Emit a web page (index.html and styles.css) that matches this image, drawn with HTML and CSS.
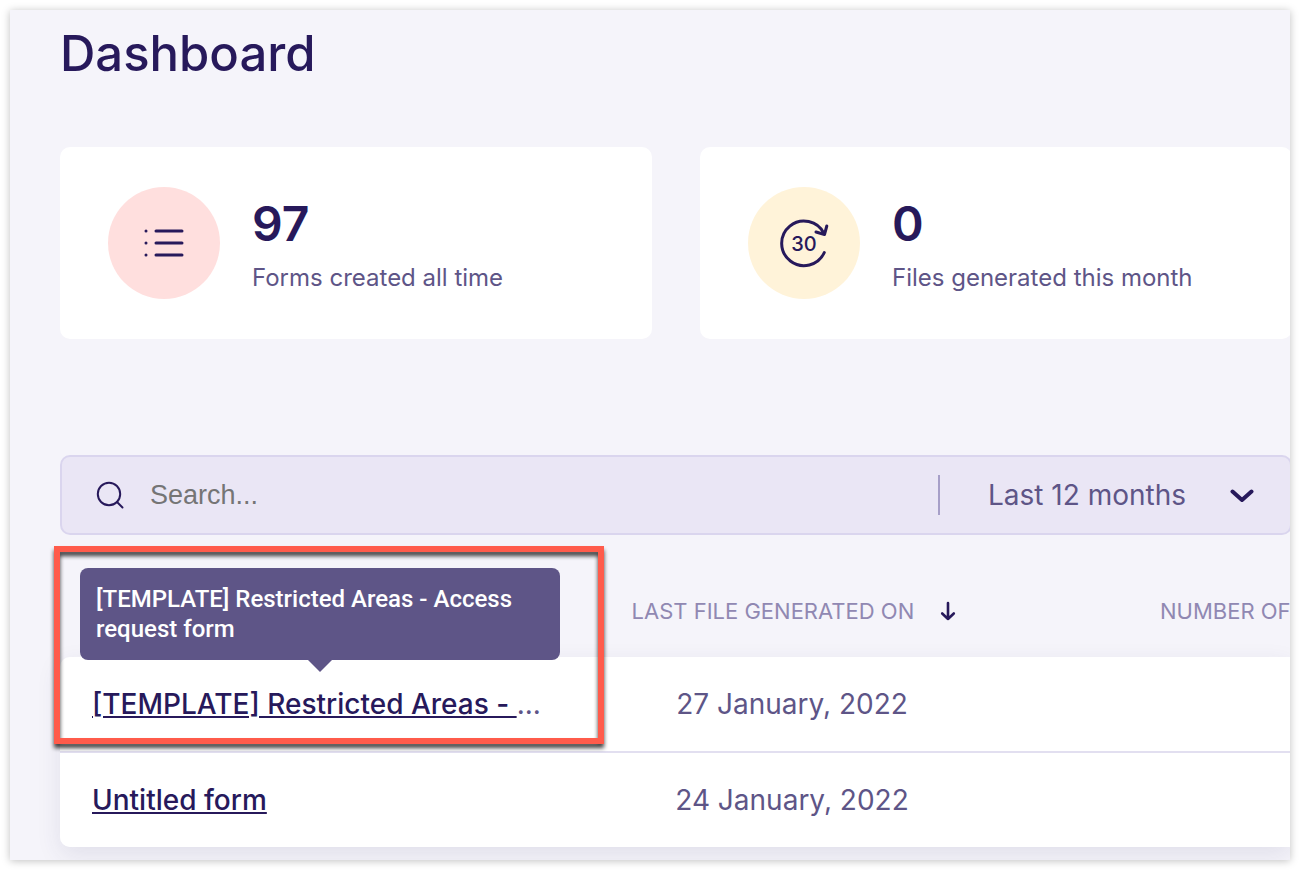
FILE: index.html
```
<!DOCTYPE html>
<html lang="en">
<head>
<meta charset="UTF-8">
<meta name="viewport" content="width=device-width, initial-scale=1.0">
<title>Dashboard</title>
<link rel="stylesheet" href="styles.css">
</head>
<body>
    <main class="window">
        <div class="content">
            <h1>Dashboard</h1>

            <div class="stats">
                <div class="card">
                    <div class="card-icon pink">
                        <svg width="48" height="48" viewBox="0 0 48 48" fill="none" stroke="#27195b" stroke-width="3" stroke-linecap="round">
                            <path d="M16 12h26M16 24h26M16 36h26"/>
                            <path d="M6 12h.01M6 24h.01M6 36h.01"/>
                        </svg>
                    </div>
                    <div class="card-text">
                        <strong>97</strong>
                        <span>Forms created all time</span>
                    </div>
                </div>
                <div class="card">
                    <div class="card-icon yellow">
                        <svg width="56" height="56" viewBox="0 0 56 56" fill="none" stroke="#27195b" stroke-width="3" stroke-linecap="round" stroke-linejoin="round">
                            <path d="M48.300 37.500A22.300 22.300 0 1 1 48 18.500"/>
                            <path d="M40 17l8.500 2.500L50.800 11"/>
                            <text x="28" y="36" text-anchor="middle">30</text>
                        </svg>
                    </div>
                    <div class="card-text">
                        <strong>0</strong>
                        <span>Files generated this month</span>
                    </div>
                </div>
            </div>

            <form class="search">
                <svg class="search-icon" width="28" height="28" viewBox="0 0 28 28" fill="none" stroke="#27195b" stroke-width="2" stroke-linecap="round">
                    <circle cx="13" cy="13" r="11.200"/>
                    <path d="M21 21l5.500 5.500"/>
                </svg>
                <input type="text" placeholder="Search..." aria-label="Search">
                <div class="period">
                    <select aria-label="Period">
                        <option>Last 12 months</option>
                    </select>
                    <svg class="chevron" width="24" height="16" viewBox="0 0 24 16" fill="none" stroke="#27195b" stroke-width="4" stroke-linecap="round" stroke-linejoin="round">
                        <path d="M2.500 3.500L12 12l9.500-8.500"/>
                    </svg>
                </div>
            </form>

            <div class="forms">
                <table>
                    <thead>
                        <tr>
                            <th class="col-name" aria-label="Name"></th>
                            <th class="col-date">
                                <span>Last file generated on</span>
                                <svg width="16" height="20" viewBox="0 0 16 20" fill="none" stroke="#27195b" stroke-width="2.600" stroke-linecap="round" stroke-linejoin="round">
                                    <path d="M8 2v16M2.200 12.500L8 18l5.800-5.500"/>
                                </svg>
                            </th>
                            <th class="col-number">Number of</th>
                        </tr>
                    </thead>
                    <tbody>
                        <tr>
                            <td>
                                <div class="name">
                                    <a href="#">[TEMPLATE] Restricted Areas - </a>...
                                    <div class="tooltip" role="tooltip">[TEMPLATE] Restricted Areas - Access request form</div>
                                </div>
                            </td>
                            <td class="date">27 January, 2022</td>
                            <td></td>
                        </tr>
                        <tr>
                            <td>
                                <div class="name">
                                    <a href="#">Untitled form</a>
                                </div>
                            </td>
                            <td class="date">24 January, 2022</td>
                            <td></td>
                        </tr>
                    </tbody>
                </table>
                <div class="highlight"></div>
            </div>
        </div>
    </main>
</body>
</html>
```

FILE: styles.css
```
* {
    box-sizing: border-box;
}
body {
    margin: 0;
    padding: 10px;
    background: #fff;
    font-family: Inter, "Liberation Sans", sans-serif;
    color: #5e5587;
}
.window {
    background: #f5f4fa;
    padding: 14px 0 13px 50px;
    overflow: hidden;
    box-shadow: 0 1px 8px rgba(0, 0, 0, 0.25);
}
/* content runs slightly past the right edge of the window */
.content {
    margin-right: -2px;
}
h1 {
    margin: 0 0 63px;
    font-size: 49px;
    line-height: 60px;
    font-weight: 500;
    color: #27195b;
}

/* stats */
.stats {
    display: grid;
    grid-template-columns: 1fr 1fr;
    gap: 48px;
    margin-bottom: 116px;
}
.card {
    display: flex;
    align-items: center;
    gap: 32px;
    padding: 40px 48px;
    background: #fff;
    border-radius: 10px;
}
.card-icon {
    display: flex;
    align-items: center;
    justify-content: center;
    flex: none;
    width: 112px;
    height: 112px;
    border-radius: 50%;
}
.card-icon text {
    font-size: 20px;
    font-weight: 500;
    fill: #27195b;
    stroke: none;
}
.pink {
    background: #ffdfde;
}
.yellow {
    background: #fff3d9;
}
.card-text {
    display: flex;
    flex-direction: column;
    gap: 8px;
    padding-top: 2px;
}
.card-text strong {
    font-size: 48px;
    line-height: 60px;
    font-weight: 600;
    color: #27195b;
}
.card-text span {
    font-size: 24px;
    line-height: 32px;
}

/* search bar */
.search {
    display: flex;
    align-items: center;
    height: 80px;
    padding-left: 34px;
    background: #eae6f5;
    border: 2px solid #dad5ee;
    border-radius: 10px;
}
.search-icon {
    flex: none;
}
.search input {
    flex: 1;
    min-width: 0;
    height: 76px;
    padding: 0 26px;
    border: none;
    outline: none;
    background: transparent;
    font-family: "Liberation Sans", Arial, sans-serif;
    font-size: 27px;
    color: #27195b;
}
.search input::placeholder {
    color: #757575;
}
.period {
    position: relative;
    border-left: 2px solid #a79fc8;
}
.period select {
    appearance: none;
    display: block;
    width: 350px;
    height: 40px;
    padding: 0 100px 0 48px;
    border: none;
    background: transparent;
    font-family: inherit;
    font-size: 28px;
    color: #5e5587;
}
.chevron {
    position: absolute;
    right: 36px;
    top: 13px;
    pointer-events: none;
}

/* forms table */
.forms {
    position: relative;
}
table {
    width: 100%;
    table-layout: fixed;
    border-collapse: separate;
    border-spacing: 0;
}
th {
    height: 122px;
    padding: 30px 0 0;
    font-size: 22px;
    line-height: 28px;
    font-weight: 400;
    text-transform: uppercase;
    white-space: nowrap;
    color: #9088b2;
}
.col-name {
    width: 512px;
}
.col-date {
    width: 440px;
    padding-left: 4px;
}
.col-date span {
    margin-right: 20px;
}
.col-date svg {
    vertical-align: -2px;
}
.col-number {
    padding-left: 148px;
    text-align: left;
}
tbody {
    border-radius: 10px;
    box-shadow: 0 8px 24px rgba(45, 50, 100, 0.1);
}
td {
    height: 94px;
    padding: 0;
    background: #fff;
    font-size: 28px;
    line-height: 36px;
}
tbody tr:first-child td {
    height: 96px;
    border-bottom: 2px solid #e2dff0;
}
tbody tr:first-child td:first-child {
    border-top-left-radius: 10px;
}
tbody tr:last-child td:first-child {
    border-bottom-left-radius: 10px;
}
.date {
    text-align: center;
}
.name {
    position: relative;
    margin: 0 32px;
    white-space: nowrap;
}
.name a {
    font-weight: 500;
    color: #27195b;
    text-decoration-thickness: 2px;
    text-underline-offset: 2px;
}
.tooltip {
    position: absolute;
    left: -12px;
    bottom: 62px;
    width: 480px;
    padding: 16px;
    background: #5e5587;
    border-radius: 8px;
    font-family: Roboto, sans-serif;
    font-size: 24px;
    line-height: 30px;
    font-weight: 500;
    white-space: normal;
    color: #fff;
}
.tooltip::after {
    content: "";
    position: absolute;
    top: 100%;
    left: 50%;
    margin-left: -12px;
    border: 12px solid transparent;
    border-top-color: #5e5587;
    border-bottom: none;
}
/* red frame around the hovered row */
.highlight {
    position: absolute;
    top: 11px;
    left: -6px;
    width: 550px;
    height: 198px;
    border: 6px solid #ff5b4b;
    filter: drop-shadow(0 4px 2px rgba(0, 0, 0, 0.75));
    pointer-events: none;
}
```
